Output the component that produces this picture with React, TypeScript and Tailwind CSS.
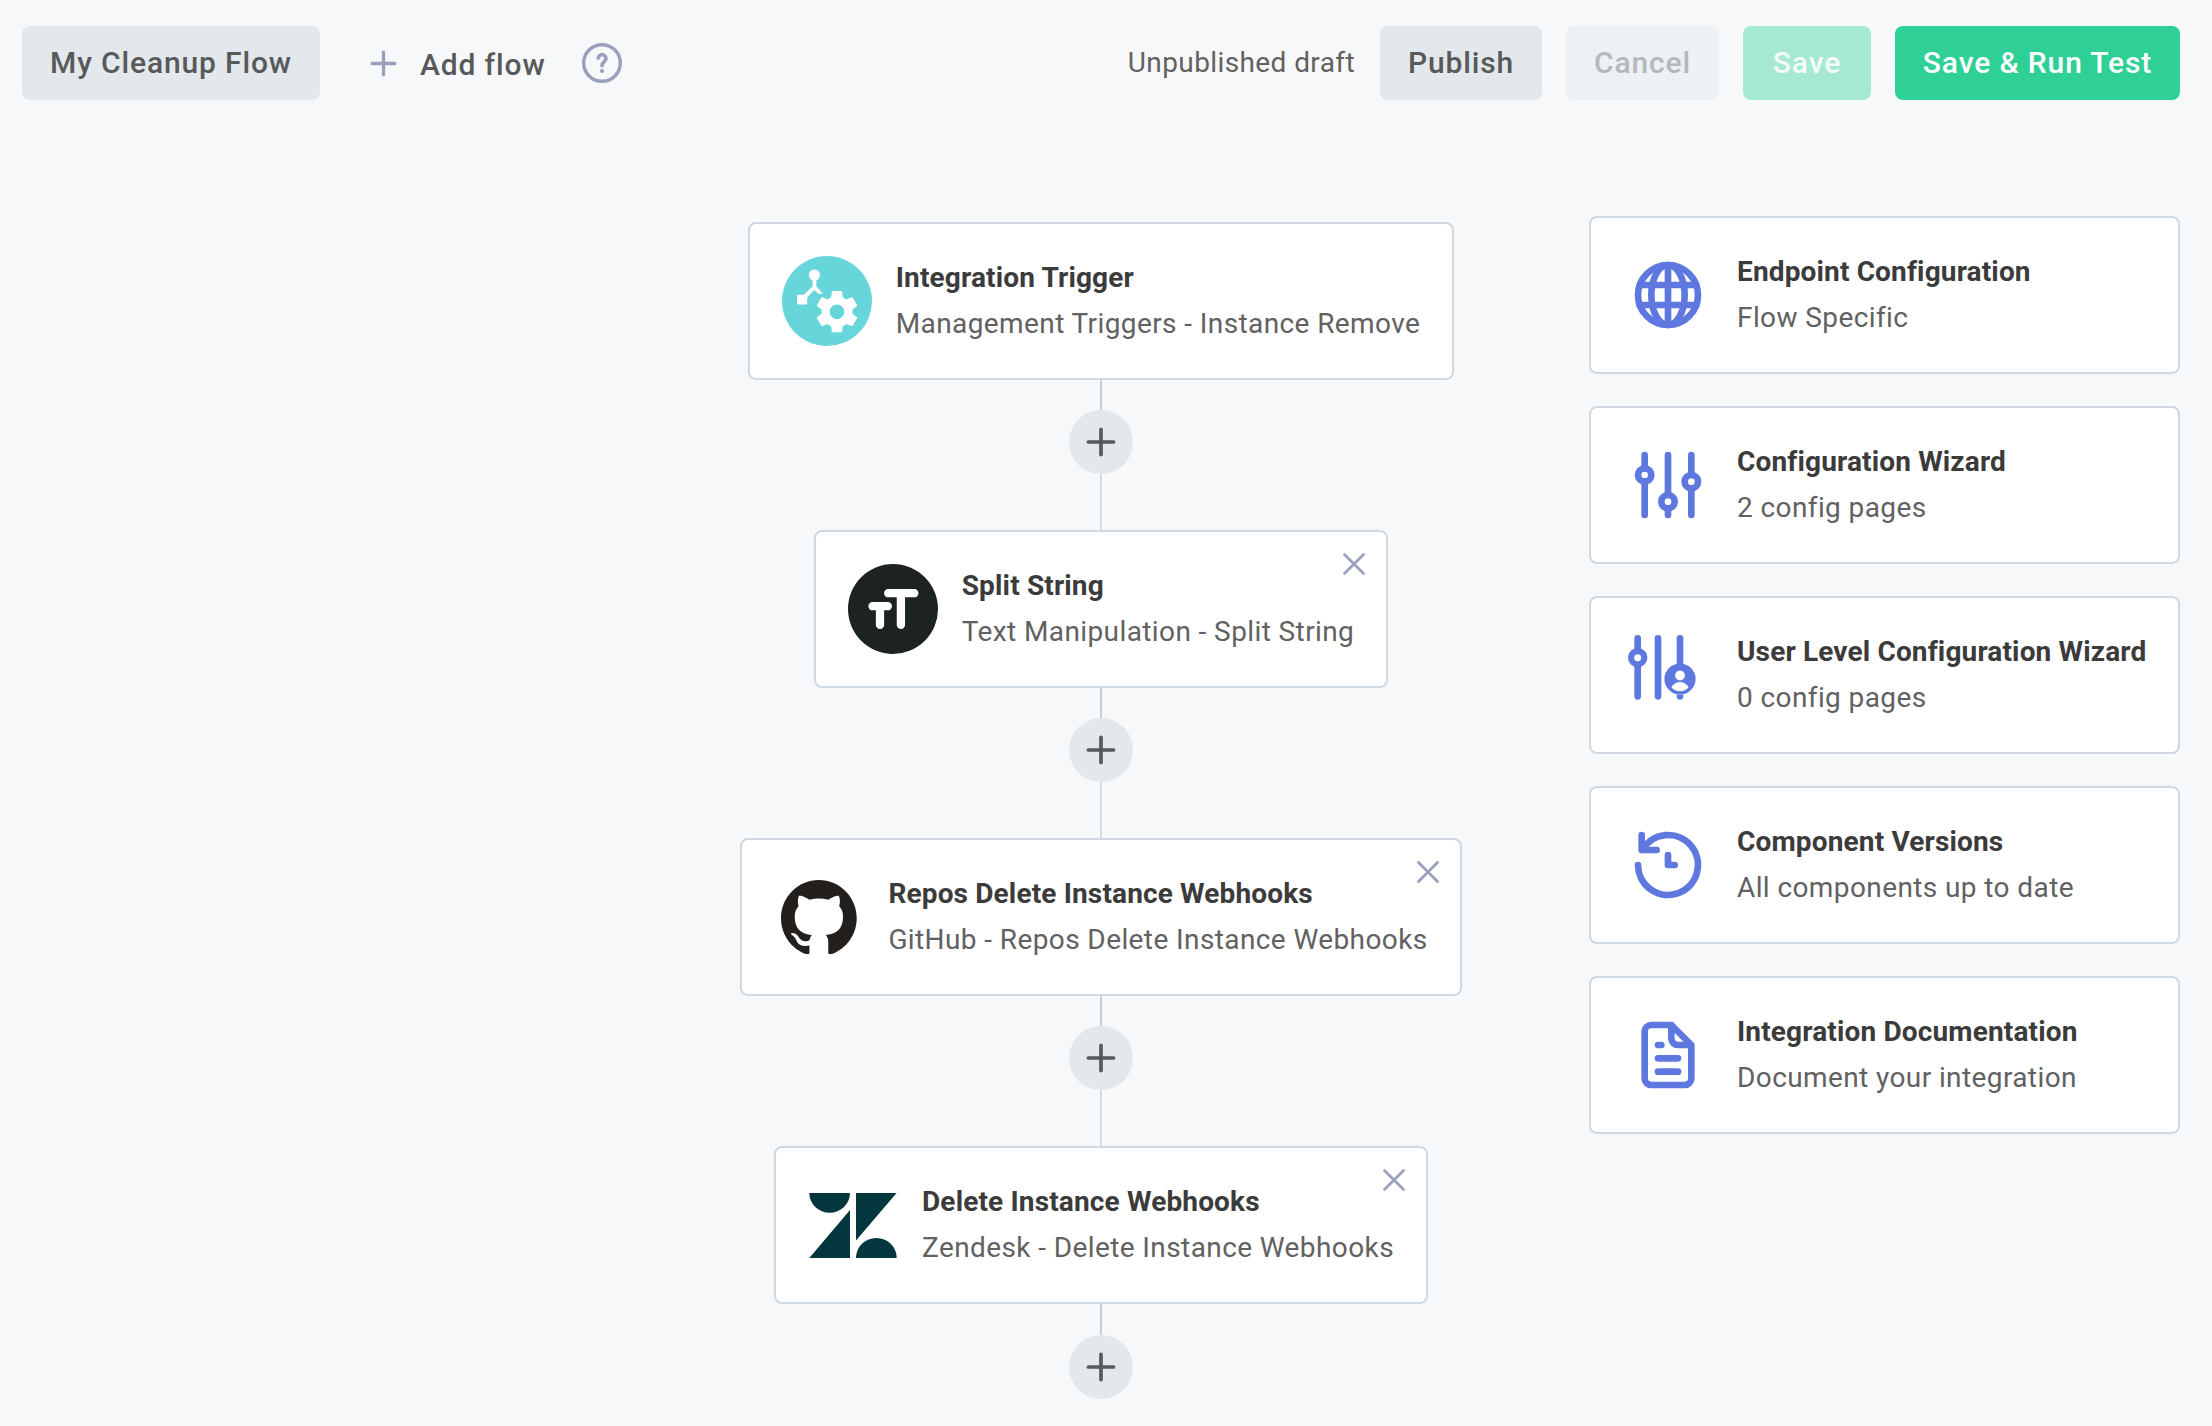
import type { ReactNode } from "react";

function IntegrationIcon() {
  return (
    <svg viewBox="0 0 90 90" className="size-[90px]">
      <circle cx="45" cy="45" r="45" fill="#67d6da" />
      <g fill="#fff">
        <circle cx="32.4" cy="19" r="5.6" />
        <rect x="15" y="38.7" width="10.2" height="9.8" rx="1.3" />
        <path d="M30.5 22h3.8v8.3l6.6 7.5h-4.800l-3.700-3.700-8.700 8.800-2.600-3.200 9.400-9.500z" />
        <path
          transform="translate(29.2 29.9) scale(2.15)"
          d="M19.14 12.94c.04-.3.06-.61.06-.94 0-.32-.02-.64-.07-.94l2.03-1.58c.18-.14.23-.41.12-.61l-1.92-3.32c-.12-.22-.37-.29-.59-.22l-2.39.96c-.5-.38-1.03-.7-1.62-.94l-.36-2.54c-.04-.24-.24-.41-.48-.41h-3.84c-.24 0-.43.17-.47.41l-.36 2.54c-.59.24-1.13.57-1.62.94l-2.39-.96c-.22-.08-.47 0-.59.22L2.74 8.87c-.12.21-.08.47.12.61l2.03 1.58c-.05.3-.09.63-.09.94s.02.64.07.94l-2.03 1.58c-.18.14-.23.41-.12.61l1.92 3.32c.12.22.37.29.59.22l2.39-.96c.5.38 1.03.7 1.62.94l.36 2.54c.05.24.24.41.48.41h3.84c.24 0 .44-.17.47-.41l.36-2.54c.59-.24 1.13-.56 1.62-.94l2.39.96c.22.08.47 0 .59-.22l1.92-3.32c.12-.22.07-.47-.12-.61l-2.01-1.58zM12 15.4c-1.88 0-3.4-1.52-3.4-3.4s1.52-3.4 3.4-3.4 3.4 1.52 3.4 3.4-1.52 3.4-3.4 3.4z"
        />
      </g>
    </svg>
  );
}

function TextIcon() {
  return (
    <svg viewBox="0 0 90 90" className="size-[90px]">
      <circle cx="45" cy="45" r="45" fill="#1c2322" />
      <g stroke="#fff" strokeWidth="8.3" strokeLinecap="round" fill="none">
        <path d="M40.2 29.2H66.3M52.9 30V60.9M24.5 42.2H39.8M32 43V60.9" />
      </g>
    </svg>
  );
}

function GitHubIcon() {
  return (
    <svg viewBox="0 0 98 96" className="h-[74.6px] w-[76px]" fill="#231f1c">
      <path d="M48.854 0C21.839 0 0 22 0 49.217c0 21.756 13.993 40.172 33.405 46.69 2.427.49 3.316-1.059 3.316-2.362 0-1.141-.08-5.052-.08-9.127-13.59 2.934-16.42-5.867-16.42-5.867-2.184-5.704-5.42-7.17-5.42-7.17-4.448-3.015.324-3.015.324-3.015 4.934.326 7.523 5.052 7.523 5.052 4.367 7.496 11.404 5.378 14.235 4.074.404-3.178 1.699-5.378 3.074-6.6-10.839-1.141-22.243-5.378-22.243-24.283 0-5.378 1.94-9.778 5.014-13.2-.485-1.222-2.184-6.275.486-13.038 0 0 4.125-1.304 13.426 5.052a46.97 46.97 0 0 1 12.214-1.63c4.125 0 8.33.571 12.213 1.63 9.302-6.356 13.427-5.052 13.427-5.052 2.67 6.763.97 11.816.485 13.038 3.155 3.422 5.015 7.822 5.015 13.2 0 18.905-11.404 23.06-22.324 24.283 1.78 1.548 3.316 4.481 3.316 9.126 0 6.6-.08 11.897-.08 13.526 0 1.304.89 2.853 3.316 2.364 19.412-6.52 33.405-24.935 33.405-46.691C97.707 22 75.788 0 48.854 0z" />
    </svg>
  );
}

function ZendeskIcon() {
  return (
    <svg viewBox="0 0 90 90" className="size-[90px]" fill="#03363d">
      <path d="M1.3 13H42a20.3 19.8 0 0 1-40.7 0zM42 30v48H1.3zM48 13h40.6L48 60.5zM48 78a20.3 20 0 0 1 40.7 0z" />
    </svg>
  );
}

function LineIcon({ children }: { children: ReactNode }) {
  return (
    <svg
      viewBox="0 0 24 24"
      className="size-20"
      fill="none"
      stroke="#5f78e0"
      strokeWidth="2"
      strokeLinecap="round"
      strokeLinejoin="round"
    >
      {children}
    </svg>
  );
}

function UserSlidersIcon() {
  return (
    <svg viewBox="0 0 90 90" className="size-[90px]" fill="none" stroke="#5f78e0" strokeWidth="6.7" strokeLinecap="round">
      <path d="M14.7 8.4V20M14.7 36V66.3M35 8.4V66.3M57 8.4V66.3" />
      <circle cx="14.7" cy="27.7" r="6.6" strokeWidth="6.2" />
      <circle cx="57" cy="49" r="15.6" fill="#5f78e0" stroke="none" />
      <path d="M53 64.5h8" stroke="#fff" strokeWidth=".6" strokeLinecap="butt" opacity=".7" />
      <circle cx="57" cy="45.5" r="4.9" fill="#fff" stroke="none" />
      <path d="M48.4 57.3c2-3.3 5-5.3 8.6-5.3s6.6 2 8.6 5.3c-2.2 2.6-5.2 4-8.6 4s-6.4-1.4-8.6-4z" fill="#fff" stroke="none" />
    </svg>
  );
}

function PlusIcon({ className }: { className: string }) {
  return (
    <svg viewBox="0 0 30 30" className={className} fill="none" stroke="currentColor" strokeWidth="3.7" strokeLinecap="round">
      <path d="M15 2.4V27.6M2.4 15H27.6" />
    </svg>
  );
}

function Card({
  icon,
  title,
  subtitle,
  closable,
}: {
  icon: ReactNode;
  title: string;
  subtitle: string;
  closable?: boolean;
}) {
  return (
    <div className="relative flex h-[158px] items-center rounded-lg border-2 border-[#d0d9e1] bg-white px-8">
      <div className="flex size-[90px] shrink-0 items-center justify-center">{icon}</div>
      <div className="ml-6 whitespace-nowrap text-[28px] leading-[46px]">
        <div className="font-bold tracking-[0.15px] text-[#3b3b3b]">{title}</div>
        <div className="tracking-[0.4px] text-[#616161]">{subtitle}</div>
      </div>
      {closable && (
        <svg
          viewBox="0 0 22 22"
          className="absolute top-[21px] right-[21px] size-[22px]"
          fill="none"
          stroke="#9a9fbd"
          strokeWidth="2.7"
          strokeLinecap="round"
        >
          <path d="M1.5 1.5l19 19M20.5 1.5l-19 19" />
        </svg>
      )}
    </div>
  );
}

function Connector({ last }: { last?: boolean }) {
  return (
    <div className="flex flex-col items-center">
      <div className={last ? "h-[31px] w-0.5 bg-[#c5d0da]" : "h-[30px] w-0.5 bg-[#c5d0da]"} />
      <div className="flex size-16 items-center justify-center rounded-full bg-[#e2e8ec] text-[#58595b]">
        <PlusIcon className="size-[30px]" />
      </div>
      {!last && <div className="h-14 w-0.5 bg-[#d3dce3]" />}
    </div>
  );
}

const steps = [
  { icon: <IntegrationIcon />, title: "Integration Trigger", subtitle: "Management Triggers - Instance Remove" },
  { icon: <TextIcon />, title: "Split String", subtitle: "Text Manipulation - Split String" },
  { icon: <GitHubIcon />, title: "Repos Delete Instance Webhooks", subtitle: "GitHub - Repos Delete Instance Webhooks" },
  { icon: <ZendeskIcon />, title: "Delete Instance Webhooks", subtitle: "Zendesk - Delete Instance Webhooks" },
];

const panels = [
  {
    title: "Endpoint Configuration",
    subtitle: "Flow Specific",
    icon: (
      <LineIcon>
        <circle cx="12" cy="12" r="9" />
        <ellipse cx="12" cy="12" rx="5" ry="9" />
        <path d="M12 3v18M3.5 9h17M3.5 15h17" />
      </LineIcon>
    ),
  },
  {
    title: "Configuration Wizard",
    subtitle: "2 config pages",
    icon: (
      <LineIcon>
        <path d="M5 3v4M5 11v10M12 3v12M12 19v2M19 3v6M19 13v8" />
        <circle cx="5" cy="9" r="2" />
        <circle cx="12" cy="17" r="2" />
        <circle cx="19" cy="11" r="2" />
      </LineIcon>
    ),
  },
  { title: "User Level Configuration Wizard", subtitle: "0 config pages", icon: <UserSlidersIcon /> },
  {
    title: "Component Versions",
    subtitle: "All components up to date",
    icon: (
      <LineIcon>
        <path d="M3 12a9 9 0 1 0 1.2-4.5M4.1 3v4.5h4.5M12 9v3h2" />
      </LineIcon>
    ),
  },
  {
    title: "Integration Documentation",
    subtitle: "Document your integration",
    icon: (
      <LineIcon>
        <path d="M13 3H7a2 2 0 0 0-2 2v14a2 2 0 0 0 2 2h10a2 2 0 0 0 2-2V9zM13 3v4a2 2 0 0 0 2 2h4M9 9h1M9 13h6M9 17h6" />
      </LineIcon>
    ),
  },
];

const button = "flex h-[74px] items-center justify-center rounded-lg pb-px";

export default function App() {
  return (
    <div className="h-[1426px] w-[2212px] overflow-hidden bg-[#f7f8fa] font-['Roboto',sans-serif]">
      <header className="flex h-[126px] items-center whitespace-nowrap pr-8 pl-[22px] text-[30px] font-medium tracking-[0.857px] text-[#58595a]">
        <button className={`${button} w-[298px] bg-[#e2e8ec]`}>My Cleanup Flow</button>
        <button className="ml-[50px] flex items-center">
          <PlusIcon className="size-[27px] text-[#9a9fbd]" />
          <span className="ml-[23px] pt-[3px]">Add flow</span>
        </button>
        <svg viewBox="0 0 40 40" className="ml-9 size-10" fill="none" stroke="#9a9fbd" strokeLinecap="round">
          <circle cx="20" cy="20" r="18.3" strokeWidth="3.4" />
          <path d="M16.2 15.3a3.9 3.7 0 1 1 6.4 2.9c-1.5 1.2-2.6 2-2.6 4.6" strokeWidth="3.6" />
          <circle cx="20" cy="28" r="2.1" fill="#9a9fbd" stroke="none" />
        </svg>
        <span className="ml-auto mr-[25px] text-[28px] font-normal tracking-[0.4px] text-[#616161]">Unpublished draft</span>
        <div className="flex gap-6">
          <button className={`${button} w-[162px] bg-[#e2e8ec]`}>Publish</button>
          <button className={`${button} w-[153px] bg-[#edf1f3] text-[#b6b8ba]`}>Cancel</button>
          <button className={`${button} w-[128px] bg-[#a6e9d1] text-[#f3fcf9]`}>Save</button>
          <button className={`${button} w-[285px] bg-[#2fd096] text-white`}>Save &amp; Run Test</button>
        </div>
      </header>
      <div className="flex pl-[740px] pr-8">
        <main className="flex w-[722px] flex-col items-center pt-24">
          {steps.map((step, i) => (
            <div key={step.title} className="flex flex-col items-center">
              <Card {...step} closable={i > 0} />
              <Connector last={i === steps.length - 1} />
            </div>
          ))}
        </main>
        <aside className="ml-auto flex w-[591px] flex-col gap-8 pt-[90px]">
          {panels.map((panel) => (
            <Card key={panel.title} {...panel} />
          ))}
        </aside>
      </div>
    </div>
  );
}
